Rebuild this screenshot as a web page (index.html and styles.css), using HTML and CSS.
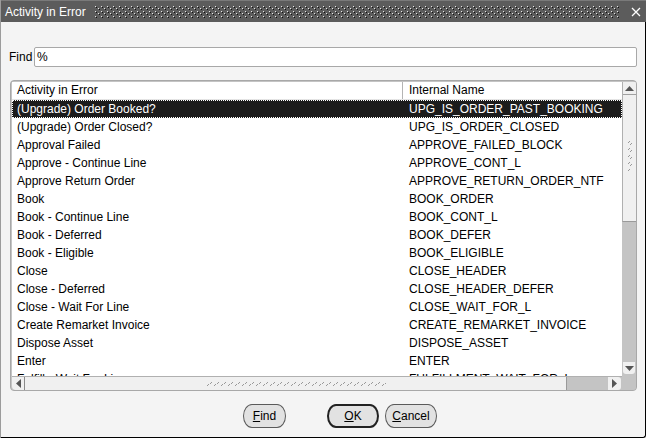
FILE: index.html
```html
<!DOCTYPE html>
<html>
<head>
<meta charset="utf-8">
<link rel="stylesheet" href="styles.css">
</head>
<body>
<div class="window">
  <div class="titlebar">
    <span class="title-text">Activity in Error</span>
    <svg class="pattern" width="100%" height="12">
      <defs>
        <pattern id="dots" width="6" height="5" patternUnits="userSpaceOnUse">
          <rect x="0" y="0" width="1" height="1" fill="#e6e6e6"/>
          <rect x="1" y="1" width="1" height="1" fill="#111"/>
          <rect x="3" y="2" width="1" height="1" fill="#e6e6e6"/>
          <rect x="4" y="3" width="1" height="1" fill="#111"/>
        </pattern>
      </defs>
      <rect width="100%" height="12" fill="url(#dots)"/>
    </svg>
    <svg class="close" width="10" height="10" viewBox="0 0 10 10">
      <path d="M1 1 L9 9 M9 1 L1 9" stroke="#fff" stroke-width="1.3" fill="none"/>
    </svg>
  </div>
  <div class="content">
    <div class="findrow">
      <span class="find-label">Find</span>
      <div class="find-input">%</div>
    </div>
    <div class="panel">
      <div class="list">
        <div class="header">
          <div class="col1 hcell">Activity in Error</div>
          <div class="col2 hcell">Internal Name</div>
        </div>
        <div class="row selected"><div class="col1">(Upgrade) Order Booked?</div><div class="col2">UPG_IS_ORDER_PAST_BOOKING</div></div>
        <div class="row"><div class="col1">(Upgrade) Order Closed?</div><div class="col2">UPG_IS_ORDER_CLOSED</div></div>
        <div class="row"><div class="col1">Approval Failed</div><div class="col2">APPROVE_FAILED_BLOCK</div></div>
        <div class="row"><div class="col1">Approve - Continue Line</div><div class="col2">APPROVE_CONT_L</div></div>
        <div class="row"><div class="col1">Approve Return Order</div><div class="col2">APPROVE_RETURN_ORDER_NTF</div></div>
        <div class="row"><div class="col1">Book</div><div class="col2">BOOK_ORDER</div></div>
        <div class="row"><div class="col1">Book - Continue Line</div><div class="col2">BOOK_CONT_L</div></div>
        <div class="row"><div class="col1">Book - Deferred</div><div class="col2">BOOK_DEFER</div></div>
        <div class="row"><div class="col1">Book - Eligible</div><div class="col2">BOOK_ELIGIBLE</div></div>
        <div class="row"><div class="col1">Close</div><div class="col2">CLOSE_HEADER</div></div>
        <div class="row"><div class="col1">Close - Deferred</div><div class="col2">CLOSE_HEADER_DEFER</div></div>
        <div class="row"><div class="col1">Close - Wait For Line</div><div class="col2">CLOSE_WAIT_FOR_L</div></div>
        <div class="row"><div class="col1">Create Remarket Invoice</div><div class="col2">CREATE_REMARKET_INVOICE</div></div>
        <div class="row"><div class="col1">Dispose Asset</div><div class="col2">DISPOSE_ASSET</div></div>
        <div class="row"><div class="col1">Enter</div><div class="col2">ENTER</div></div>
        <div class="row"><div class="col1">Fulfill - Wait For Line</div><div class="col2">FULFILLMENT_WAIT_FOR_L</div></div>
      </div>
      <div class="vscroll">
        <div class="vthumb">
          <div class="vup">
            <svg width="9" height="5" viewBox="0 0 9 5"><path d="M0 5 L4.5 0 L9 5 Z" fill="#555"/></svg>
          </div>
          <svg class="vgrip" width="6" height="34" viewBox="0 0 6 34">
            <g stroke="#999" stroke-width="1">
              <path d="M1 4 L3 2 M3 6 L5 4 M1 11 L3 9 M3 13 L5 11 M1 18 L3 16 M3 20 L5 18 M1 25 L3 23 M3 27 L5 25 M1 32 L3 30"/>
            </g>
          </svg>
        </div>
        <div class="vspace"></div>
        <div class="vdown">
          <svg width="9" height="5" viewBox="0 0 9 5"><path d="M0 0 L4.5 5 L9 0 Z" fill="#555"/></svg>
        </div>
      </div>
      <div class="hscroll">
        <div class="hthumb">
          <div class="hleft">
            <svg width="5" height="9" viewBox="0 0 5 9"><path d="M5 0 L0 4.5 L5 9 Z" fill="#555"/></svg>
          </div>
          <div class="hgrip-wrap">
            <svg class="hgrip" width="180" height="6">
              <defs>
                <pattern id="hg" width="7" height="6" patternUnits="userSpaceOnUse">
                  <path d="M1 5 L3 3 M4 3 L6 1" stroke="#999" stroke-width="1"/>
                </pattern>
              </defs>
              <rect width="180" height="6" fill="url(#hg)"/>
            </svg>
          </div>
        </div>
        <div class="hspace"></div>
        <div class="hright">
          <svg width="5" height="9" viewBox="0 0 5 9"><path d="M0 0 L5 4.5 L0 9 Z" fill="#555"/></svg>
        </div>
      </div>
      <div class="corner"></div>
    </div>
    <div class="buttons">
      <div class="btn btn-find"><span class="mn">F</span>ind</div>
      <div class="btn btn-ok"><span class="mn">O</span>K</div>
      <div class="btn btn-cancel"><span class="mn">C</span>ancel</div>
    </div>
  </div>
</div>
</body>
</html>
```

FILE: styles.css
```css
html, body {
  margin: 0;
  padding: 0;
  background: #ffffff;
}
body {
  width: 647px;
  height: 439px;
  overflow: hidden;
  font-family: "Liberation Sans", Arial, sans-serif;
  font-size: 12px;
  color: #000;
}
.window {
  width: 644px;
  height: 437px;
  background: #f4f4f4;
  border-left: 1px solid #9c9c9c;
  border-right: 1px solid #000;
  border-bottom: 1px solid #000;
  border-bottom-right-radius: 3px;
  display: flex;
  flex-direction: column;
  box-sizing: content-box;
}
.titlebar {
  height: 22px;
  background: #5c5c5c;
  display: flex;
  align-items: center;
  color: #fff;
  padding-left: 4px;
  border-top: 1px solid #7a7a7a;
  box-sizing: border-box;
  margin-right: -1px;
}
.title-text {
  font-size: 12px;
  white-space: nowrap;
}
.pattern {
  flex: 1;
  height: 12px;
  margin: 0 12px 0 9px;
}
.close {
  margin-right: 5px;
}
.content {
  flex: 1;
  display: flex;
  flex-direction: column;
  padding: 25px 8px 0 8px;
}
.findrow {
  display: flex;
  align-items: center;
  height: 20px;
}
.find-label {
  width: 25px;
}
.find-input {
  flex: 1;
  height: 20px;
  box-sizing: border-box;
  background: #fff;
  border: 1px solid #a8a8a8;
  border-radius: 2px;
  padding-left: 2px;
  line-height: 18px;
}
.panel {
  margin-top: 13px;
  margin-left: 1px;
  border: 1px solid #a8a8a8;
  border-radius: 4px;
  padding: 1px 0 0 1px;
  display: grid;
  grid-template-columns: 610px 14px;
  grid-template-rows: 294px 14px;
  background: #c4c4c4;
  overflow: hidden;
}
.list {
  background: #fff;
  overflow: hidden;
}
.header {
  display: flex;
  height: 18px;
  border-bottom: 1px solid #e4e4e4;
  box-sizing: border-box;
}
.hcell {
  line-height: 17px;
}
.header .col1 {
  border-right: 1px solid #b4b4b4;
}
.row {
  display: flex;
  height: 18px;
  line-height: 18px;
  box-sizing: border-box;
  white-space: nowrap;
}
.col1 {
  width: 391px;
  padding-left: 5px;
  box-sizing: border-box;
  flex: none;
}
.col2 {
  padding-left: 6px;
  flex: 1;
  overflow: hidden;
}
.row.selected {
  background: #1c1c1c;
  color: #fff;
  outline: 1px dotted #fff;
  outline-offset: -1px;
}
.vscroll {
  display: flex;
  flex-direction: column;
  background: #c4c4c4;
}
.vthumb {
  height: 140px;
  background: #f0f0f0;
  border-left: 1px solid #b0b0b0;
  border-bottom: 1px solid #9a9a9a;
  box-sizing: border-box;
  display: flex;
  flex-direction: column;
  align-items: center;
}
.vup {
  height: 13px;
  width: 100%;
  border-bottom: 1px solid #a0a0a0;
  box-sizing: border-box;
  display: flex;
  align-items: center;
  justify-content: center;
}
.vgrip {
  margin-top: 44px;
}
.vspace {
  flex: 1;
}
.vdown {
  height: 12px;
  margin: 0 1px 2px 1px;
  background: #f0f0f0;
  border-radius: 0 0 3px 3px;
  display: flex;
  align-items: center;
  justify-content: center;
}
.hscroll {
  display: flex;
  background: #c4c4c4;
  border-top: 1px solid #b0b0b0;
  box-sizing: border-box;
}
.hthumb {
  width: 555px;
  background: #f0f0f0;
  border-right: 1px solid #9a9a9a;
  border-radius: 0 0 0 4px;
  box-sizing: border-box;
  display: flex;
}
.hleft {
  width: 13px;
  border-right: 1px solid #8a8a8a;
  box-sizing: border-box;
  display: flex;
  align-items: center;
  justify-content: center;
}
.hgrip-wrap {
  flex: 1;
  display: flex;
  align-items: center;
  justify-content: center;
}
.hspace {
  flex: 1;
}
.hright {
  width: 13px;
  margin-right: 1px;
  background: #f0f0f0;
  border-radius: 0 3px 3px 0;
  display: flex;
  align-items: center;
  justify-content: center;
}
.corner {
  background: #c4c4c4;
}
.buttons {
  display: flex;
  margin-top: 13px;
  height: 24px;
  padding-left: 234px;
}
.btn {
  height: 24px;
  box-sizing: border-box;
  background: #e2e2e2;
  border: 1px solid #5a5a5a;
  border-radius: 9px / 12px;
  display: flex;
  align-items: center;
  justify-content: center;
}
.btn-find {
  width: 43px;
}
.btn-ok {
  width: 52px;
  margin-left: 41px;
  border: 2px solid #222;
}
.btn-cancel {
  width: 52px;
  margin-left: 6px;
}
.mn {
  text-decoration: underline;
}
```
